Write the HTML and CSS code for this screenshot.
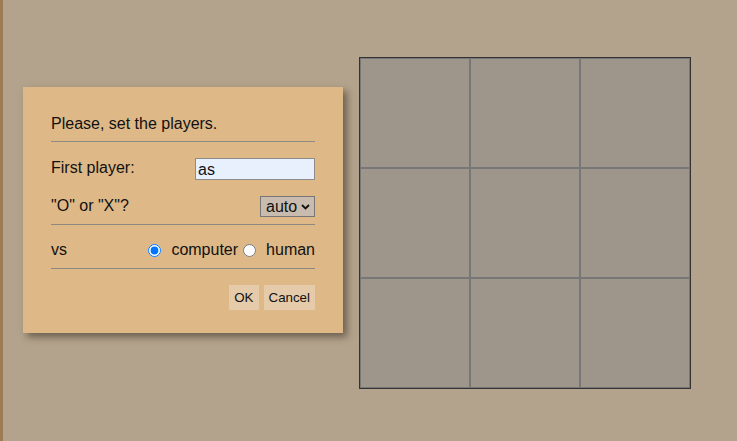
FILE: index.html
```html
<!DOCTYPE html>
<html>
<head>
<meta charset="utf-8">
<link rel="stylesheet" href="styles.css">
</head>
<body>
<main class="page">
  <table class="board">
    <tr><td></td><td></td><td></td></tr>
    <tr><td></td><td></td><td></td></tr>
    <tr><td></td><td></td><td></td></tr>
  </table>
</main>
<div class="dialog">
  <div class="title">Please, set the players.</div>
  <hr class="sep sep-title">
  <div class="row row-name">
    <label class="lbl lbl-name" for="p1">First player:</label>
    <input id="p1" class="name" type="text" value="as">
  </div>
  <div class="row row-mark">
    <label class="lbl lbl-mark" for="mark">"O" or "X"?</label>
    <span class="select-wrap">
      <select id="mark" class="mark"><option>auto</option><option>O</option><option>X</option></select>
      <svg class="chev" width="9" height="6" viewBox="0 0 9 6"><path d="M1 1 L4.5 4.5 L8 1" fill="none" stroke="#111" stroke-width="1.8"/></svg>
    </span>
  </div>
  <hr class="sep sep-mark">
  <div class="row row-vs">
    <span class="lbl">vs</span>
    <span class="opts">
      <input class="radio" type="radio" name="vs" id="vc" checked><label class="opt" for="vc">computer</label>
      <input class="radio radio-2" type="radio" name="vs" id="vh"><label class="opt" for="vh">human</label>
    </span>
  </div>
  <hr class="sep sep-vs">
  <div class="buttons">
    <button class="btn">OK</button>
    <button class="btn">Cancel</button>
  </div>
</div>
</body>
</html>
```
FILE: styles.css
```css
html, body {
  margin: 0;
  padding: 0;
  height: 100%;
}
body {
  background: #b3a38c;
  border-left: 3px solid #9c7b55;
  box-sizing: border-box;
  font-family: "Liberation Sans", Arial, sans-serif;
  color: #111;
  overflow: hidden;
}
.page {
  padding: 57px 0 0 356px;
}
.board {
  border: 1px solid #333;
  border-spacing: 0;
  border-collapse: separate;
}
.board td {
  width: 108px;
  height: 108px;
  padding: 0;
  border: 1px solid #777;
  background: #9e958b;
}
.dialog {
  position: absolute;
  left: 23px;
  top: 87px;
  width: 264px;
  padding: 28px 28px 23px 28px;
  background: #deb887;
  box-shadow: 4px 4px 7px rgba(40, 30, 20, 0.5);
  font-size: 16px;
  line-height: 18px;
}
.title {
  height: 18px;
}
.sep {
  border: 0;
  border-top: 1px solid #8f8a80;
  margin: 0;
  height: 0;
}
.sep-title { margin-top: 8px; }
.row {
  display: flex;
  justify-content: space-between;
  align-items: flex-start;
}
.lbl-name, .lbl-mark { position: relative; top: 1px; }
.row-name { margin-top: 16px; }
.row-mark { margin-top: 16px; }
.sep-mark { margin-top: 7px; }
.row-vs { margin-top: 16px; align-items: center; height: 18px; }
.sep-vs { margin-top: 9px; }
.name {
  box-sizing: border-box;
  width: 120px;
  height: 22px;
  margin: 0;
  padding: 1px 2px 0 2px;
  border: 1px solid #8c8c8c;
  background: #e8f0fe;
  font-family: "Liberation Sans", Arial, sans-serif;
  font-size: 16px;
  color: #111;
  outline: none;
}
.select-wrap {
  position: relative;
  display: block;
  width: 55px;
  height: 21px;
}
.mark {
  -webkit-appearance: none;
  appearance: none;
  box-sizing: border-box;
  width: 55px;
  height: 21px;
  margin: 0;
  padding: 0 0 0 5px;
  border: 1px solid #777;
  border-radius: 0;
  background: #c9bcaf;
  font-family: "Liberation Sans", Arial, sans-serif;
  font-size: 16px;
  line-height: 19px;
  color: #111;
  outline: none;
}
.chev {
  position: absolute;
  right: 5px;
  top: 8px;
  pointer-events: none;
}
.opts {
  display: flex;
  align-items: center;
}
.radio {
  width: 13px;
  height: 13px;
  margin: 0;
}
.radio-2 { margin-left: 5px; }
.opt {
  margin-left: 10px;
}
.buttons {
  margin-top: 16px;
  display: flex;
  justify-content: flex-end;
  gap: 5px;
}
.btn {
  height: 25px;
  padding: 0 5px;
  border: 0;
  border-radius: 0;
  background: #e5cba9;
  font-family: "Liberation Sans", Arial, sans-serif;
  font-size: 13.33px;
  color: #111;
}
```
